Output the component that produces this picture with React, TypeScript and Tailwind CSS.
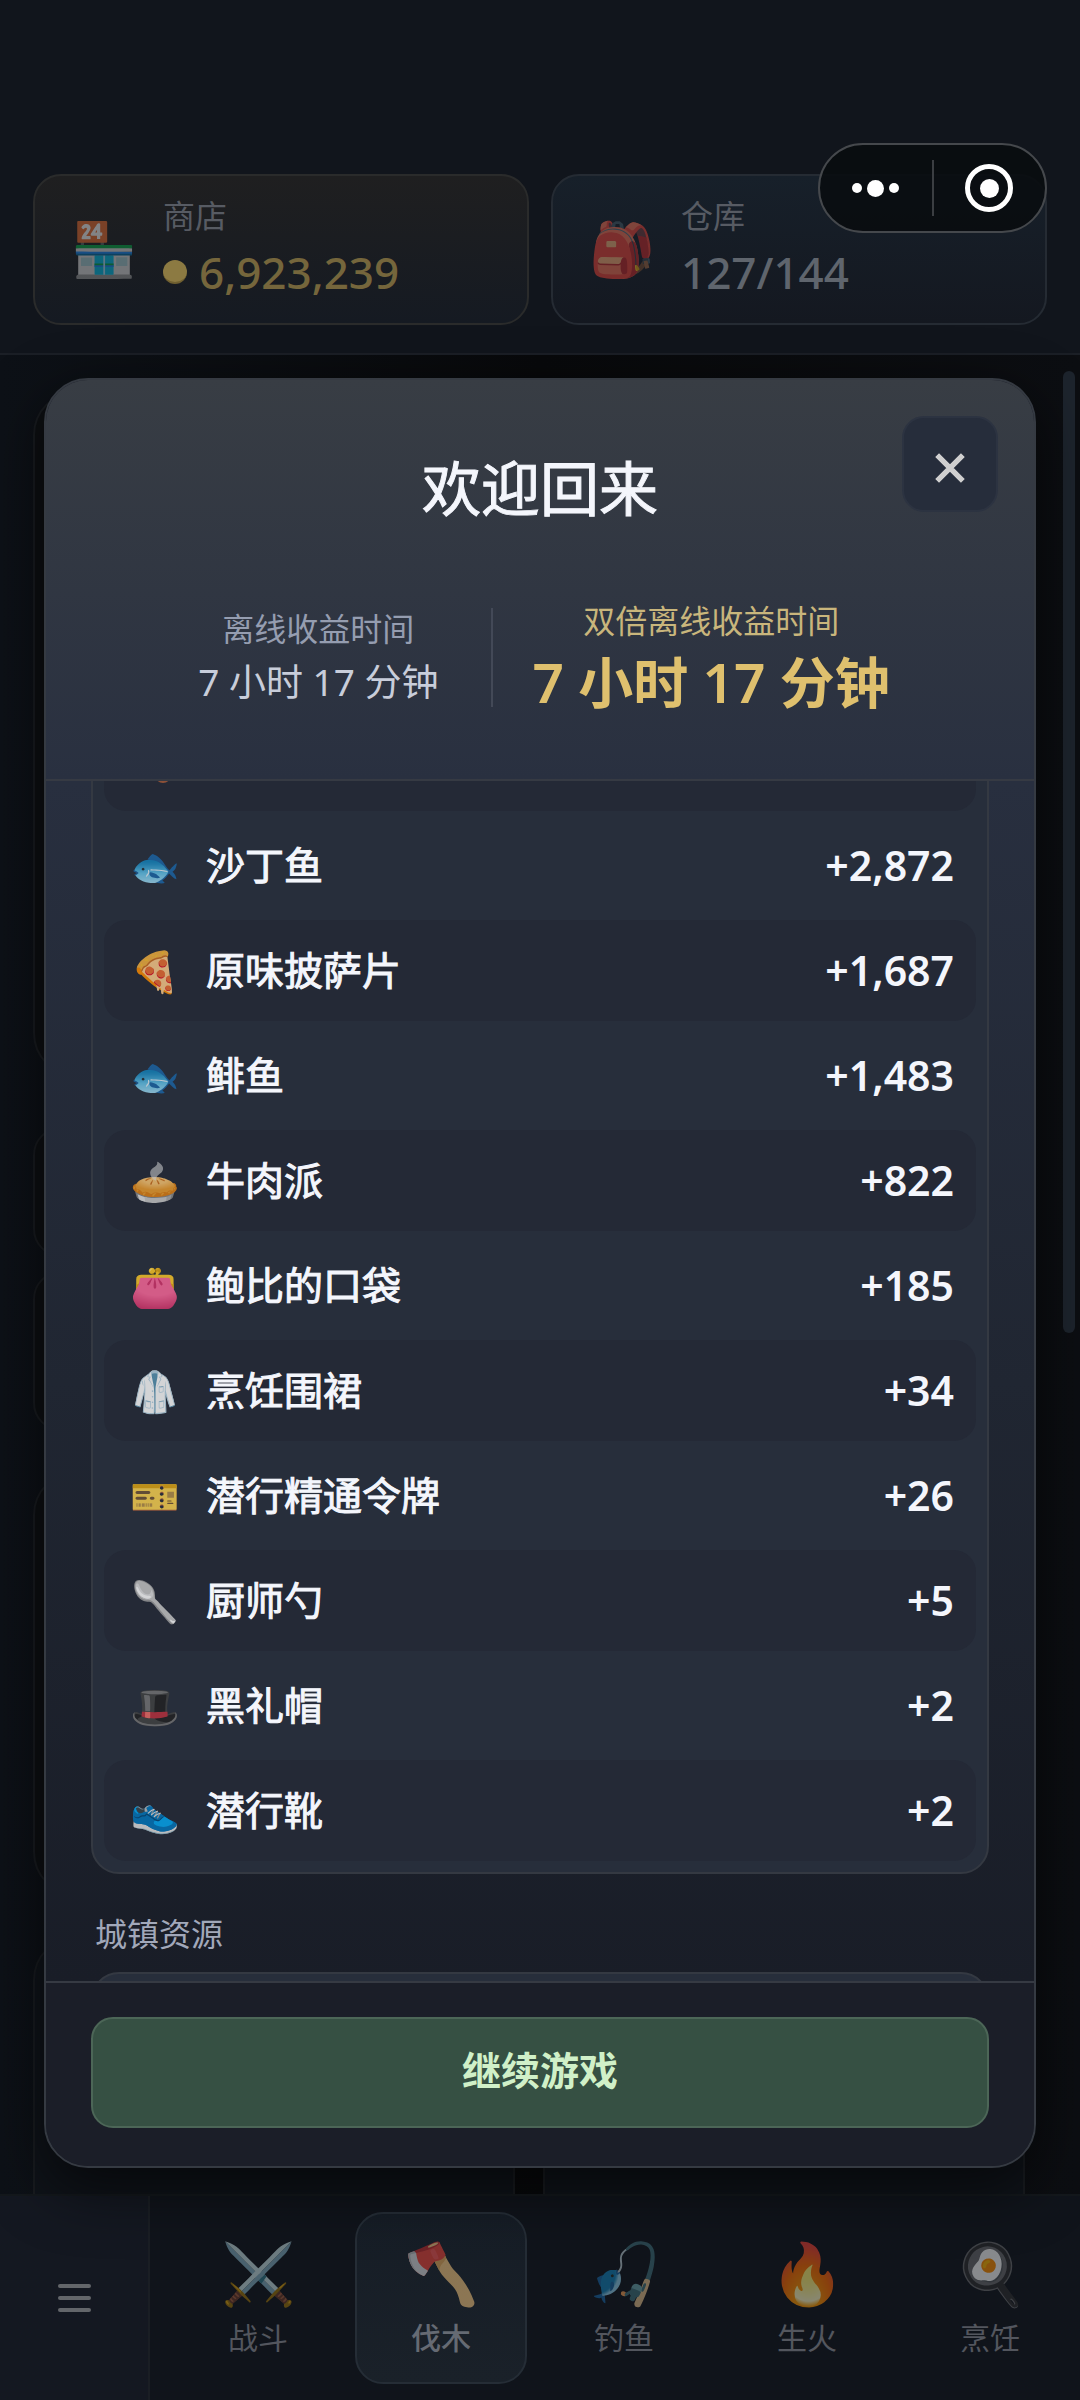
import { Fragment, useState } from "react";

type Reward = { icon: string; name: string; count: number };

const REWARDS: Reward[] = [
  { icon: "🐟", name: "沙丁鱼", count: 2872 },
  { icon: "🍕", name: "原味披萨片", count: 1687 },
  { icon: "🐟", name: "鲱鱼", count: 1483 },
  { icon: "🥧", name: "牛肉派", count: 822 },
  { icon: "👛", name: "鲍比的口袋", count: 185 },
  { icon: "🥼", name: "烹饪围裙", count: 34 },
  { icon: "🎫", name: "潜行精通令牌", count: 26 },
  { icon: "🥄", name: "厨师勺", count: 5 },
  { icon: "🎩", name: "黑礼帽", count: 2 },
  { icon: "👟", name: "潜行靴", count: 2 },
];

const NAV = [
  { icon: "⚔️", label: "战斗" },
  { icon: "🪓", label: "伐木" },
  { icon: "🎣", label: "钓鱼" },
  { icon: "🔥", label: "生火" },
  { icon: "🍳", label: "烹饪" },
];

const TIMES = [
  {
    label: "离线收益时间", value: "7 小时 17 分钟",
    labelClass: "text-[#959db0]", valueClass: "text-[37px] leading-[56px] text-[#c8cdda]",
  },
  {
    label: "双倍离线收益时间", value: "7 小时 17 分钟",
    labelClass: "text-[#c9b67c]", valueClass: "text-[55px] leading-[72px] font-semibold text-[#dfc06e]",
  },
];

function Header() {
  return (
    <header className="flex gap-[22px] px-[33px] pt-[174px] pb-7 bg-[#11151c] border-b-2 border-[#1b1f26]">
      <button className="flex flex-1 items-center gap-7 h-[151px] pl-9 pr-4 pb-1 rounded-[28px] border-2 border-[#2a2b2b] bg-linear-to-b from-[#1f1f20] to-[#151a22] text-left">
        <span className="w-16 text-[53px] leading-none opacity-45">🏪</span>
        <span>
          <span className="block text-[32px] leading-10 text-[#575b63]">商店</span>
          <span className="flex items-center gap-3 pt-2 text-[44px] leading-14 font-medium text-[#75663c]">
            <span className="size-6 rounded-full border-b-2 border-[#6f5f30] bg-[#8c7a42]" />
            6,923,239
          </span>
        </span>
      </button>
      <button className="flex flex-1 items-center gap-7 h-[151px] pl-9 pr-4 pb-1 rounded-[28px] border-2 border-[#252b33] bg-linear-to-b from-[#17202a] to-[#141820] text-left">
        <span className="w-16 text-[53px] leading-none opacity-45">🎒</span>
        <span>
          <span className="block text-[32px] leading-10 text-[#575b63]">仓库</span>
          <span className="block pt-2 text-[44px] leading-14 font-medium text-[#5f656d]">127/144</span>
        </span>
      </button>
    </header>
  );
}

// system capsule, always above the page
function Capsule() {
  return (
    <div className="absolute top-[143px] right-[33px] z-30 flex items-center w-[229px] h-[90px] rounded-full border-2 border-[#45484c] bg-[#090c10]/90">
      <button aria-label="更多" className="flex flex-1 items-center justify-center gap-[5px]">
        <span className="size-[10px] rounded-full bg-white" />
        <span className="size-[17px] rounded-full bg-white" />
        <span className="size-[10px] rounded-full bg-white" />
      </button>
      <span className="w-[2px] h-14 bg-[#3b3e42]" />
      <button aria-label="关闭" className="flex flex-1 justify-center">
        <span className="flex items-center justify-center size-12 rounded-full border-[5px] border-white">
          <span className="size-[19px] rounded-full bg-white" />
        </span>
      </button>
    </div>
  );
}

function Content() {
  return (
    <main className="relative flex-1 min-h-0 overflow-hidden bg-linear-to-r from-[#0d1117] via-[#08090b] to-[#0c0e12] pl-[33px] pr-[55px] pt-9">
      <div className="flex flex-col gap-[14px]">
        <div className="h-[686px] mb-9 rounded-[44px] border-2 border-[#181b1f] bg-[#0d0f12]" />
        <div className="h-[130px] rounded-[28px] border-2 border-[#181b1f] bg-[#0d0f12]" />
        <div className="h-[160px] mb-[26px] rounded-[28px] border-2 border-[#181b1f] bg-[#0d0f12]" />
        <div className="h-[425px] mb-[26px] rounded-[44px] border-2 border-[#181b1f] bg-[#0d0f12]" />
        <div className="flex gap-7">
          <div className="flex-1 h-[400px] rounded-[44px] border-2 border-[#181b1f] bg-[#0f1319]" />
          <div className="flex-1 h-[400px] rounded-[44px] border-2 border-[#181b1f] bg-[#0f1319]" />
        </div>
      </div>
      <div className="absolute top-4 right-[5px] w-3 h-[962px] rounded-full bg-[#1d242d]" />
    </main>
  );
}

function BottomNav() {
  const [active, setActive] = useState("伐木");

  return (
    <nav className="flex h-[206px] border-t-2 border-[#14181c] bg-[#10141b]">
      <button aria-label="菜单" className="flex flex-col items-center justify-center gap-2 w-[150px] shrink-0 border-r-2 border-[#1a1e24] bg-[#141821]">
        <span className="w-[33px] h-1 rounded-full bg-[#63666a]" />
        <span className="w-[33px] h-1 rounded-full bg-[#63666a]" />
        <span className="w-[33px] h-1 rounded-full bg-[#63666a]" />
      </button>
      <div className="flex flex-1 items-start gap-[11px] pl-[22px] pr-1 pt-4">
        {NAV.map(n => (
          <button key={n.label} onClick={() => setActive(n.label)}
            className={`flex flex-1 flex-col items-center h-[172px] pt-5 rounded-[28px] border-2 ${active === n.label ? "border-[#252d36] bg-linear-to-b from-[#161d26] to-[#1a2129] text-[#656a73] font-medium" : "border-transparent text-[#53565e]"}`}>
            <span className="h-[78px] text-[60px] leading-[76px] opacity-50">{n.icon}</span>
            <span className="text-[30px] leading-[52px]">{n.label}</span>
          </button>
        ))}
      </div>
    </nav>
  );
}

function WelcomeModal({ onClose }: { onClose: () => void }) {
  return (
    <div role="dialog" aria-label="欢迎回来"
      className="absolute inset-x-11 top-[378px] bottom-[232px] z-20 flex flex-col overflow-hidden rounded-[44px] border-2 border-[#353a42] bg-[#1b1e28] shadow-[0_20px_60px_rgba(0,0,0,0.6)]">
      <div className="relative h-[401px] shrink-0 border-b-2 border-[#363a43] bg-linear-to-b from-[#383d44] to-[#293040]">
        <h1 className="pt-16 text-center text-[59px] leading-[88px] text-[#f4f6fc] [-webkit-text-stroke:1px]">欢迎回来</h1>
        <button onClick={onClose} aria-label="关闭"
          className="absolute top-9 right-9 flex items-center justify-center size-24 pt-2 rounded-[22px] border-2 border-[#2c3341] bg-[#262d3b]">
          <svg viewBox="0 0 28 28" className="size-[30px]" fill="none" stroke="#cfcfcf" strokeWidth="5">
            <path d="M2 2l24 24M26 2L2 26" />
          </svg>
        </button>
        <div className="flex items-center justify-center gap-10 pl-2 pt-16">
          {TIMES.map((t, i) => (
            <Fragment key={t.label}>
              {i > 0 && <div className="w-[2px] h-[99px] ml-3 bg-[#434957]" />}
              <div className="text-center">
                <p className={`text-[32px] leading-[50px] ${t.labelClass}`}>{t.label}</p>
                <p className={t.valueClass}>{t.value}</p>
              </div>
            </Fragment>
          ))}
        </div>
      </div>

      {/* scrolled reward list */}
      <div className="flex-1 min-h-0 overflow-hidden bg-linear-to-b from-[#282f3f] via-[#202632] to-[#191d27] px-[45px]">
        <ul className="-mt-[84px] flex flex-col gap-1 p-[11px] rounded-[28px] border-2 border-[#343942] bg-[#272e3b]">
          <li className="flex items-center h-[101px] px-7 rounded-[22px] bg-[#242936]">
            <span className="flex justify-center items-end w-[46px] h-11 pl-4">
              <span className="w-4 h-10 rounded-full bg-[#8d5138]" />
            </span>
          </li>
          {REWARDS.map((r, i) => (
            <li key={r.name}
              className={`flex items-center h-[101px] pl-7 pr-[22px] rounded-[22px] text-[#f4f6fc] ${i % 2 ? "bg-[#242936]" : ""}`}>
              <span className="flex justify-center w-[46px] mr-7 text-[40px] leading-none opacity-80">{r.icon}</span>
              <span className="flex-1 text-[39px] [-webkit-text-stroke:1px]">{r.name}</span>
              <span className="text-[41px] font-semibold">+{r.count.toLocaleString("en-US")}</span>
            </li>
          ))}
        </ul>
        <h2 className="pt-9 px-1 text-[32px] leading-[48px] text-[#a1a8ba]">城镇资源</h2>
        <div className="mt-[14px] h-28 rounded-[28px] border-2 border-[#343942] bg-[#272e3b]" />
      </div>

      <div className="shrink-0 px-[45px] pt-[34px] pb-[38px] border-t-2 border-[#363a43] bg-[#1b1e28]">
        <button onClick={onClose}
          className="block w-full h-[111px] pb-1 rounded-[22px] border-2 border-[#4c6657] bg-[#365043] text-[39px] font-semibold text-[#d0f0c8]">
          继续游戏
        </button>
      </div>
    </div>
  );
}

export default function App() {
  const [open, setOpen] = useState(true);

  return (
    <div className="relative flex flex-col h-screen overflow-hidden bg-[#0c0f14] font-['Noto_Sans','Noto_Sans_CJK_SC',sans-serif]">
      <Header />
      <Capsule />
      <Content />
      <BottomNav />
      {open && <WelcomeModal onClose={() => setOpen(false)} />}
    </div>
  );
}
